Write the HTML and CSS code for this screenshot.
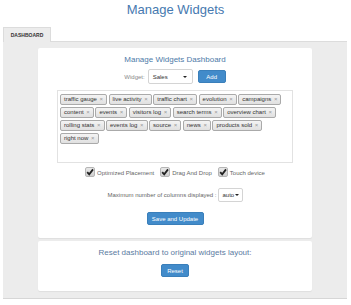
FILE: index.html
```html
<!DOCTYPE html>
<html lang="en">
<head>
      <meta charset="UTF-8">
      <meta name="viewport" content="width=device-width, initial-scale=1.0">
      <title>Manage Widgets</title>
      <link rel="stylesheet" href="styles.css">
</head>
<body>
      <h1 class="titulo">Manage Widgets</h1>

      <div class="abas">
            <div class="aba">DASHBOARD</div>
      </div>

      <div class="painel">
            <div class="cartao">
                  <h2>Manage Widgets Dashboard</h2>

                  <div class="linha-widget">
                        <span class="rotulo">Widget:</span>
                        <div class="seletor seletor-widget">Sales <span class="seta"></span></div>
                        <button class="btn">Add</button>
                  </div>

                  <div class="caixa-tags">
                        <span class="tag">traffic gauge <i>×</i></span>
                        <span class="tag">live activity <i>×</i></span>
                        <span class="tag">traffic chart <i>×</i></span>
                        <span class="tag">evolution <i>×</i></span>
                        <span class="tag">campaigns <i>×</i></span>
                        <span class="tag">content <i>×</i></span>
                        <span class="tag">events <i>×</i></span>
                        <span class="tag">visitors log <i>×</i></span>
                        <span class="tag">search terms <i>×</i></span>
                        <span class="tag">overview chart <i>×</i></span>
                        <span class="tag">rolling stats <i>×</i></span>
                        <span class="tag">events log <i>×</i></span>
                        <span class="tag">source <i>×</i></span>
                        <span class="tag">news <i>×</i></span>
                        <span class="tag">products sold <i>×</i></span>
                        <span class="tag">right now <i>×</i></span>
                  </div>

                  <div class="opcoes">
                        <label class="opcao"><span class="check"><svg viewBox="0 0 10 10" width="10" height="10"><path d="M2.2 5.2 L4.2 7.4 L8 2.4" fill="none" stroke="#222" stroke-width="1.8"/></svg></span>Optimized Placement</label>
                        <label class="opcao"><span class="check"><svg viewBox="0 0 10 10" width="10" height="10"><path d="M2.2 5.2 L4.2 7.4 L8 2.4" fill="none" stroke="#222" stroke-width="1.8"/></svg></span>Drag And Drop</label>
                        <label class="opcao"><span class="check"><svg viewBox="0 0 10 10" width="10" height="10"><path d="M2.2 5.2 L4.2 7.4 L8 2.4" fill="none" stroke="#222" stroke-width="1.8"/></svg></span>Touch device</label>
                  </div>

                  <div class="linha-colunas">
                        <span class="rotulo rotulo-colunas">Maximum number of columns displayed :</span>
                        <div class="seletor seletor-colunas">auto <span class="seta"></span></div>
                  </div>

                  <button class="btn btn-salvar">Save and Update</button>
            </div>

            <div class="cartao cartao-reset">
                  <h3>Reset dashboard to original widgets layout:</h3>
                  <button class="btn btn-reset">Reset</button>
            </div>
      </div>
</body>
</html>
```

FILE: styles.css
```css
*{
      padding: 0;
      margin: 0;
      box-sizing: border-box;
      font-family: 'Liberation Sans', Arial, sans-serif;
}

body{
      background-color: white;
      color: #333;
}

.titulo{
      margin-top: 2px;
      font-size: 13px;
      line-height: 15px;
      font-weight: 400;
      text-align: center;
      color: #4679b0;
}

.abas{
      margin-top: 9px;
      padding-left: 3px;
      display: flex;
}

.aba{
      width: 48px;
      height: 15px;
      background-color: #ececec;
      border: 1px solid #dcdcdc;
      border-bottom: none;
      font-size: 5px;
      font-weight: 700;
      line-height: 14px;
      text-align: center;
      color: #333;
      position: relative;
      top: 1px;
}

.painel{
      margin: 0 4px 0 3px;
      background-color: #ececec;
      border-top: 1px solid #dcdcdc;
      border-bottom: 1px solid #d6d6d6;
      padding: 6px 0 7px;
      display: flex;
      flex-direction: column;
      align-items: center;
      gap: 3px;
}

.cartao{
      width: 274px;
      background-color: white;
      border-radius: 2px;
      box-shadow: 0 1px 1px rgba(0, 0, 0, 0.06);
      display: flex;
      flex-direction: column;
      align-items: center;
      padding: 7px 0 13px;
}

.cartao h2{
      font-size: 8px;
      line-height: 10px;
      font-weight: 400;
      color: #4d7aa8;
}

.rotulo{
      font-size: 6px;
      color: #888;
      white-space: nowrap;
}

.rotulo-colunas{
      color: #666;
}

.linha-widget{
      margin-top: 4px;
      display: flex;
      align-items: center;
}

.seletor{
      border: 1px solid #d4d4d4;
      border-radius: 2px;
      background-color: white;
      font-size: 6px;
      color: #333;
      display: flex;
      align-items: center;
      justify-content: space-between;
      flex-shrink: 0;
}

.seta{
      width: 0;
      height: 0;
      border-left: 2px solid transparent;
      border-right: 2px solid transparent;
      border-top: 2.5px solid #222;
}

.seletor-widget{
      width: 45px;
      height: 15px;
      margin-left: 3px;
      padding: 0 5px 0 4px;
}

.btn{
      background-color: #428bca;
      border: 1px solid #3a7fba;
      border-radius: 2px;
      color: white;
      font-size: 6px;
      font-family: 'Liberation Sans', Arial, sans-serif;
      height: 13px;
      padding: 0 2px;
      white-space: nowrap;
}

.linha-widget .btn{
      width: 28px;
      margin-left: 5px;
}

.caixa-tags{
      margin-top: 6px;
      width: 236px;
      height: 73px;
      border: 1px solid #e2e2e2;
      padding: 3px 1px 0 2px;
      display: flex;
      flex-wrap: wrap;
      align-content: flex-start;
      gap: 2px 1.5px;
}

.tag{
      height: 11px;
      border: 1px solid #aaa;
      border-radius: 2px;
      background: linear-gradient(#f4f4f4, #e0e0e0);
      font-size: 6px;
      line-height: 9px;
      color: #333;
      padding: 0 3px;
      white-space: nowrap;
}

.tag i{
      font-style: normal;
      color: #999;
      margin-left: 1px;
}

.opcoes{
      margin-top: 4px;
      display: flex;
      gap: 6px;
}

.opcao{
      display: flex;
      align-items: flex-end;
      font-size: 6px;
      line-height: 7px;
      color: #666;
      white-space: nowrap;
}

.check{
      width: 10px;
      height: 10px;
      border: 1px solid #b5b5b5;
      border-radius: 2px;
      background: linear-gradient(#e8e8e8, #cfcfcf);
      margin-right: 2px;
      display: flex;
}

.check svg{
      margin: -1px;
}

.linha-colunas{
      margin-top: 11px;
      display: flex;
      align-items: center;
}

.seletor-colunas{
      width: 25px;
      height: 14px;
      margin-left: 1px;
      padding: 0 3px 0 4px;
}

.btn-salvar{
      margin-top: 10px;
      width: 57px;
}

.cartao-reset{
      padding: 7px 0 14px;
}

.cartao-reset h3{
      font-size: 8px;
      line-height: 10px;
      font-weight: 400;
      color: #5b7b9f;
}

.btn-reset{
      margin-top: 6px;
      width: 28px;
}
```
